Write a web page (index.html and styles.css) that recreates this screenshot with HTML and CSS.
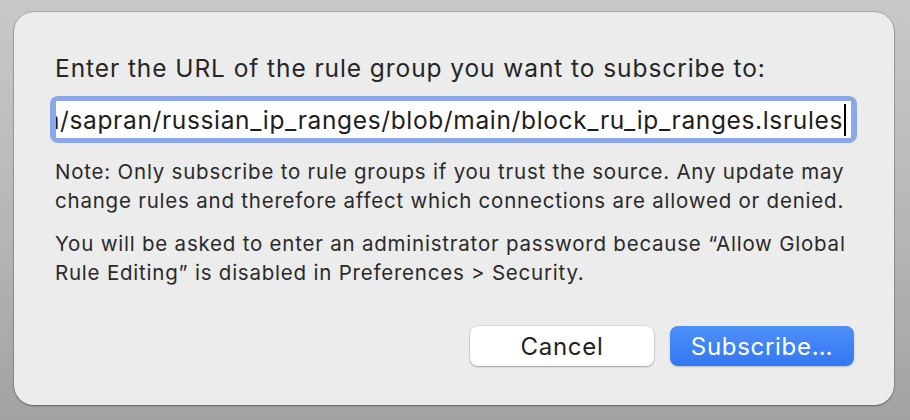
FILE: index.html
```html
<!DOCTYPE html>
<html>
<head>
<meta charset="utf-8">
<link rel="stylesheet" href="styles.css">
</head>
<body>
<div class="dialog">
  <p class="prompt">Enter the URL of the rule group you want to subscribe to:</p>
  <div class="field">
    <div class="field-inner">
      <span class="value">https://github.com/sapran/russian_ip_ranges/blob/main/block_ru_ip_ranges.lsrules</span><span class="caret"></span>
    </div>
  </div>
  <p class="note">Note: Only subscribe to rule groups if you trust the source. Any update may<br>change rules and therefore affect which connections are allowed or denied.</p>
  <p class="note second">You will be asked to enter an administrator password because “Allow Global<br>Rule Editing” is disabled in Preferences &gt; Security.</p>
  <div class="actions">
    <button class="btn cancel">Cancel</button>
    <button class="btn primary">Subscribe…</button>
  </div>
</div>
</body>
</html>
```
FILE: styles.css
```css
html, body {
  margin: 0;
  padding: 0;
}
body {
  width: 910px;
  height: 420px;
  background: linear-gradient(180deg, #c8c8c8 0%, #b6b6b6 55%, #a2a2a2 100%);
  font-family: Inter, "Liberation Sans", sans-serif;
  color: #262626;
  padding: 12px 16px 15px 14px;
  box-sizing: border-box;
}
.dialog {
  height: 393px;
  box-sizing: border-box;
  background: #ececec;
  border-radius: 20px;
  box-shadow: 0 0 0 1px rgba(0,0,0,0.13), 0 1px 2px rgba(0,0,0,0.3);
  padding: 42px 37px 0 36px;
  display: flex;
  flex-direction: column;
}
.prompt {
  margin: 0 0 0 5px;
  font-size: 24.5px;
  line-height: 28px;
  letter-spacing: 0.92px;
  white-space: nowrap;
}
.field {
  margin-top: 14px;
  border-radius: 8px;
  background: #8aa7eb;
  padding: 5px 6px 5px 6px;
}
.field-inner {
  background: #fff;
  height: 37px;
  overflow: hidden;
  display: flex;
  justify-content: flex-end;
  align-items: center;
  white-space: nowrap;
  padding-right: 5px;
  font-size: 24.5px;
  letter-spacing: 0.64px;
  color: #1e1e1e;
}
.caret {
  display: inline-block;
  width: 2px;
  height: 32px;
  background: #000;
  flex: none;
  margin-left: 1px;
}
.value {
  flex: none;
}
.note {
  margin: 14px 0 0 5px;
  font-size: 20.5px;
  line-height: 29px;
  letter-spacing: 0.78px;
  color: #2a2a2a;
  white-space: nowrap;
}
.note.second {
  margin-top: 14px;
}
.actions {
  margin-top: auto;
  margin-bottom: 39px;
  display: flex;
  justify-content: flex-end;
  gap: 16px;
  padding-right: 3px;
}
.btn {
  width: 184px;
  height: 40px;
  border-radius: 8px;
  border: none;
  font-family: Inter, "Liberation Sans", sans-serif;
  font-size: 24px;
  letter-spacing: 0.7px;
  padding: 0;
}
.cancel {
  background: #fff;
  color: #222;
  box-shadow: 0 0 0 0.5px rgba(0,0,0,0.12), 0 1px 2px rgba(0,0,0,0.28);
}
.primary {
  background: linear-gradient(180deg, #4e8ff8 0%, #3377f3 100%);
  color: #fff;
  box-shadow: 0 1px 2px rgba(0,0,0,0.2);
}
```
